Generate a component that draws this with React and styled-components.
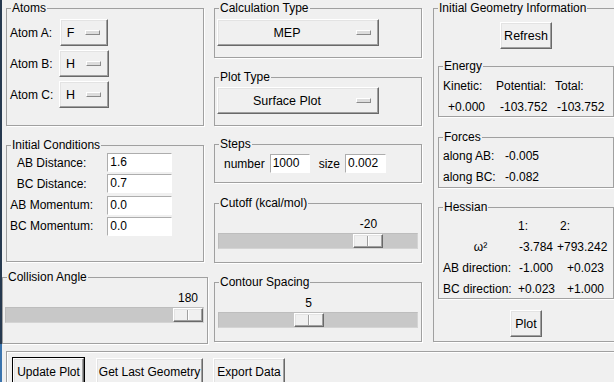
import React from 'react';
import styled, { createGlobalStyle } from 'styled-components';

const GlobalStyle = createGlobalStyle`
  html, body {
    margin: 0;
    padding: 0;
    background: #f0f0f0;
  }
  body {
    font-family: "Liberation Sans", Arial, sans-serif;
    font-size: 12px;
    color: #000;
  }
  #root {
    width: 614px;
    height: 382px;
    overflow: hidden;
  }
`;

const Window = styled.div`
  display: flex;
  width: 614px;
  height: 382px;
  overflow: hidden;
  background: #f0f0f0;
`;

const Edge = styled.div`
  flex: 0 0 2px;
  background: linear-gradient(to bottom, #26394f 0, #26394f 344px, #3a73ad 344px);
`;

const Main = styled.div`
  flex: 0 0 620px;
  display: flex;
  flex-direction: column;
`;

const TopRow = styled.div`
  display: flex;
  align-items: flex-start;
  height: 344px;
`;

const Column = styled.div`
  display: flex;
  flex-direction: column;
  flex: 0 0 ${(p) => p.$w}px;
  margin-left: ${(p) => p.$ml || 0}px;
`;

const Group = styled.fieldset`
  box-sizing: border-box;
  margin: ${(p) => p.$mt || 0}px 0 0 ${(p) => p.$ml || 0}px;
  padding: 0;
  min-width: 0;
  width: ${(p) => p.$w}px;
  height: ${(p) => p.$h}px;
  border: 1px solid #a0a0a0;
  box-shadow: 1px 1px 0 #fff;
  display: flex;
  flex-direction: column;
`;

const Legend = styled.legend`
  padding: 0 1px;
  margin-left: 4px;
  line-height: 15px;
  font-size: 12px;
`;

const raised = `
  box-sizing: border-box;
  background: #f0f0f0;
  border: 1px solid;
  border-color: #fff #696969 #696969 #fff;
  box-shadow: inset -1px -1px 0 #a0a0a0, inset 1px 1px 0 #e3e3e3;
`;

const AtomGrid = styled.div`
  display: grid;
  grid-template-columns: 44px 60px;
  grid-auto-rows: 27px;
  row-gap: 4px;
  align-items: center;
  padding: 3px 0 0 3px;
`;

const Menu = styled.div`
  ${raised}
  display: flex;
  align-items: center;
  height: 27px;
  width: ${(p) => (p.$w ? `${p.$w}px` : 'auto')};
  padding: 0 7px 0 6px;
  justify-self: center;
  margin: ${(p) => p.$mt || 0}px 0 0 ${(p) => p.$ml || 0}px;
`;

const MenuText = styled.span`
  flex: ${(p) => (p.$wide ? 1 : '0 0 auto')};
  text-align: center;
  margin-right: ${(p) => (p.$wide ? 6 : 11)}px;
  font-size: 12.5px;
`;

const Indicator = styled.span`
  ${raised}
  flex: 0 0 15px;
  height: 5px;
  background: #dcdcdc;
  box-shadow: none;
  border-color: #fff #8a8a8a #8a8a8a #fff;
`;

const FieldGrid = styled.div`
  display: grid;
  grid-template-columns: max-content 65px;
  grid-auto-rows: 19px;
  row-gap: 2.3px;
  column-gap: 14px;
  align-items: center;
  padding-left: 3px;
`;

const FieldLabel = styled.span`
  justify-self: center;
`;

const Entry = styled.div`
  box-sizing: border-box;
  width: ${(p) => p.$w || 65}px;
  height: 19px;
  line-height: 17px;
  padding-left: 2px;
  background: #fff;
  border: 1px solid;
  border-color: #adadad #fff #fff #adadad;
`;

const StepsRow = styled.div`
  display: flex;
  align-items: center;
  padding: 2px 0 0 9px;
`;

const StepLabel = styled.span`
  margin: 0 5px 0 ${(p) => p.$ml || 0}px;
`;

const Scale = styled.div`
  display: flex;
  flex-direction: column;
  padding: 5px 0 0 ${(p) => p.$ml}px;
`;

const ValueRow = styled.div`
  position: relative;
  height: 17px;
  width: ${(p) => p.$w}px;
`;

const ValueText = styled.span`
  position: absolute;
  top: 0;
  line-height: 17px;
  transform: translateX(-50%);
  white-space: nowrap;
`;

const Trough = styled.div`
  position: relative;
  box-sizing: border-box;
  width: ${(p) => p.$w}px;
  height: 16px;
  background: #c8c8c8;
  border: 1px solid;
  border-color: #bdbdbd #d4d4d4 #d4d4d4 #bdbdbd;
`;

const Handle = styled.div`
  ${raised}
  position: absolute;
  top: 0;
  width: 30px;
  height: 14px;
  &::after {
    content: '';
    position: absolute;
    left: 13px;
    top: 1px;
    bottom: 1px;
    width: 1px;
    background: #a0a0a0;
    box-shadow: 1px 0 0 #fff;
  }
`;

const Button = styled.div`
  ${raised}
  display: flex;
  align-items: center;
  justify-content: center;
  width: ${(p) => p.$w}px;
  height: 27px;
  flex: 0 0 auto;
  margin-left: ${(p) => p.$ml || 0}px;
  font-size: 12px;
  white-space: nowrap;
`;

const DefaultButton = styled(Button)`
  outline: 1px solid #000;
`;

const CenterButton = styled(Button)`
  align-self: center;
  margin-top: ${(p) => p.$mt}px;
  margin-right: 4px;
  font-size: 12.5px;
`;

const InfoInner = styled.div`
  display: flex;
  flex-direction: column;
  padding-left: 4px;
`;

const DataGrid = styled.div`
  display: grid;
  grid-template-columns: ${(p) => p.$cols};
  grid-auto-rows: ${(p) => p.$row}px;
  row-gap: ${(p) => p.$gap || 0}px;
  align-items: center;
  padding: ${(p) => p.$pt || 0}px 0 0 4px;
`;

const Cell = styled.span`
  white-space: nowrap;
  padding-left: ${(p) => p.$pl || 0}px;
  padding-right: ${(p) => p.$pr || 0}px;
  text-align: ${(p) => p.$align || 'left'};
`;

const BottomBar = styled.div`
  display: flex;
  align-items: flex-start;
  margin: 7px 0 0 4px;
  height: 40px;
  padding: 6px 0 0 6px;
  border: 1px solid #a0a0a0;
  border-right: none;
  box-shadow: inset 1px 1px 0 #fff;
`;

function Slider({ value, min, max, width, ml }) {
  const handleW = 30;
  const pos = ((value - min) / (max - min)) * (width - 2 - handleW);
  return (
    <Scale $ml={ml}>
      <ValueRow $w={width}>
        <ValueText style={{ left: pos + 1 + handleW / 2 }}>{value}</ValueText>
      </ValueRow>
      <Trough $w={width}>
        <Handle style={{ left: pos }} />
      </Trough>
    </Scale>
  );
}

const atoms = [
  ['Atom A:', 'F'],
  ['Atom B:', 'H'],
  ['Atom C:', 'H']
];

const conditions = [
  ['AB Distance:', '1.6'],
  ['BC Distance:', '0.7'],
  ['AB Momentum:', '0.0'],
  ['BC Momentum:', '0.0']
];

export default function App() {
  return (
    <>
      <GlobalStyle />
      <Window>
        <Edge />
        <Main>
          <TopRow>
            <Column $w={206}>
              <Group $w={198} $h={125} $mt={1} $ml={4}>
                <Legend>Atoms</Legend>
                <AtomGrid>
                  {atoms.map(([label, value]) => (
                    <React.Fragment key={label}>
                      <span>{label}</span>
                      <Menu>
                        <MenuText>{value}</MenuText>
                        <Indicator />
                      </Menu>
                    </React.Fragment>
                  ))}
                </AtomGrid>
              </Group>
              <Group $w={198} $h={124} $mt={12} $ml={4}>
                <Legend>Initial Conditions</Legend>
                <FieldGrid>
                  {conditions.map(([label, value]) => (
                    <React.Fragment key={label}>
                      <FieldLabel>{label}</FieldLabel>
                      <Entry>{value}</Entry>
                    </React.Fragment>
                  ))}
                </FieldGrid>
              </Group>
              <Group $w={206} $h={74} $mt={8}>
                <Legend>Collision Angle</Legend>
                <Slider value={180} min={0} max={180} width={199} ml={2} />
              </Group>
            </Column>

            <Column $w={208} $ml={6}>
              <Group $w={208} $h={57} $mt={1}>
                <Legend>Calculation Type</Legend>
                <Menu $w={162} $ml={2} $mt={3}>
                  <MenuText $wide>MEP</MenuText>
                  <Indicator />
                </Menu>
              </Group>
              <Group $w={208} $h={56} $mt={12}>
                <Legend>Plot Type</Legend>
                <Menu $w={162} $ml={2} $mt={2}>
                  <MenuText $wide>Surface Plot</MenuText>
                  <Indicator />
                </Menu>
              </Group>
              <Group $w={208} $h={46} $mt={11}>
                <Legend>Steps</Legend>
                <StepsRow>
                  <StepLabel>number</StepLabel>
                  <Entry $w={40}>1000</Entry>
                  <StepLabel $ml={9}>size</StepLabel>
                  <Entry $w={41}>0.002</Entry>
                </StepsRow>
              </Group>
              <Group $w={208} $h={67} $mt={13}>
                <Legend>Cutoff (kcal/mol)</Legend>
                <Slider value={-20} min={-100} max={0} width={200} ml={3} />
              </Group>
              <Group $w={208} $h={67} $mt={12}>
                <Legend>Contour Spacing</Legend>
                <Slider value={5} min={1} max={10} width={200} ml={3} />
              </Group>
            </Column>

            <Column $w={186} $ml={11}>
              <Group $w={186} $h={341} $mt={1}>
                <Legend>Initial Geometry Information</Legend>
                <InfoInner>
                  <CenterButton $w={52} $mt={6}>Refresh</CenterButton>
                  <Group $w={176} $h={58} $mt={10}>
                    <Legend>Energy</Legend>
                    <DataGrid $cols="53px 59px 1fr" $row={17} $gap={4} $pt={3}>
                      <Cell>Kinetic:</Cell>
                      <Cell>Potential:</Cell>
                      <Cell>Total:</Cell>
                      <Cell $pl={5}>+0.000</Cell>
                      <Cell $pl={4}>-103.752</Cell>
                      <Cell $pl={2}>-103.752</Cell>
                    </DataGrid>
                  </Group>
                  <Group $w={176} $h={58} $mt={13}>
                    <Legend>Forces</Legend>
                    <DataGrid $cols="62px 1fr" $row={17} $gap={4} $pt={2}>
                      <Cell>along AB:</Cell>
                      <Cell>-0.005</Cell>
                      <Cell>along BC:</Cell>
                      <Cell>-0.082</Cell>
                    </DataGrid>
                  </Group>
                  <Group $w={176} $h={99} $mt={12}>
                    <Legend>Hessian</Legend>
                    <DataGrid $cols="75px 39px 1fr" $row={21}>
                      <Cell />
                      <Cell>1:</Cell>
                      <Cell $pl={3}>2:</Cell>
                      <Cell $align="center">ω²</Cell>
                      <Cell $align="right" $pr={4}>-3.784</Cell>
                      <Cell>+793.242</Cell>
                      <Cell>AB direction:</Cell>
                      <Cell $align="right" $pr={4}>-1.000</Cell>
                      <Cell $pl={10}>+0.023</Cell>
                      <Cell>BC direction:</Cell>
                      <Cell $align="right" $pr={4}>+0.023</Cell>
                      <Cell $pl={10}>+1.000</Cell>
                    </DataGrid>
                  </Group>
                  <CenterButton $w={32} $mt={11}>Plot</CenterButton>
                </InfoInner>
              </Group>
            </Column>
          </TopRow>

          <BottomBar>
            <DefaultButton $w={71}>Update Plot</DefaultButton>
            <Button $w={107} $ml={12}>Get Last Geometry</Button>
            <Button $w={72} $ml={10}>Export Data</Button>
          </BottomBar>
        </Main>
      </Window>
    </>
  );
}
